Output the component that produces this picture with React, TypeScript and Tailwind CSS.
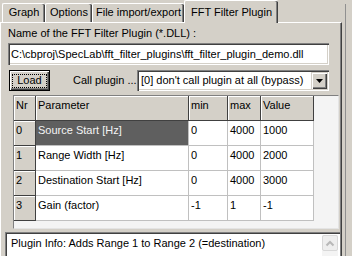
import React from "react";

const rows = [
  { nr: "0", p: "Source Start [Hz]", min: "0", max: "4000", v: "1000", sel: true },
  { nr: "1", p: "Range Width [Hz]", min: "0", max: "4000", v: "2000", sel: false },
  { nr: "2", p: "Destination Start [Hz]", min: "0", max: "4000", v: "3000", sel: false },
  { nr: "3", p: "Gain (factor)", min: "-1", max: "1", v: "-1", sel: false },
];

const fixedCell =
  "h-[25px] border-r border-b border-[#404040] bg-[#d4d0c8] shadow-[inset_1px_1px_0_#fff] pl-[2px] pt-[3px] whitespace-nowrap overflow-hidden";
const cell =
  "h-[25px] border-r border-b border-[#c0c0c0] bg-white pl-[2px] pt-[3px] whitespace-nowrap overflow-hidden";
const selCell =
  "h-[25px] border-r border-b border-[#c0c0c0] bg-[#5f5f5f] text-[#f4f4f4] pl-[2px] pt-[3px] whitespace-nowrap overflow-hidden";

const tabInactive =
  "h-[19px] shrink-0 flex items-center justify-center rounded-t-[2px] border-l border-t border-white shadow-[inset_-1px_0_0_#404040,inset_-2px_0_0_#808080] pb-[1px]";

export default function App() {
  return (
    <div className="w-[352px] h-[256px] overflow-hidden bg-[#d4d0c8] font-['Liberation_Sans',Arial,sans-serif] text-[11px] leading-[13px] text-black flex">
      <div className="w-[342px] shrink-0 flex flex-col">
        {/* tab strip */}
        <div className="h-[22px] shrink-0 flex items-end pl-[2px]">
          <div className={`${tabInactive} w-[43px]`}>Graph</div>
          <div className={`${tabInactive} w-[47px]`}>Options</div>
          <div className={`${tabInactive} w-[92px]`}>File import/export</div>
          <div className="relative z-10 h-[23px] w-[94px] -mb-[1px] shrink-0 bg-[#d4d0c8] flex justify-center pt-[5px] rounded-t-[2px] border-l border-t border-white shadow-[inset_-1px_0_0_#404040,inset_-2px_0_0_#808080]">
            FFT Filter Plugin
          </div>
        </div>

        {/* tab sheet */}
        <div className="flex-1 flex flex-col border-t border-l border-white border-r border-r-[#404040] shadow-[inset_-1px_0_0_#808080]">
          <div className="mt-[4px] ml-[7px] whitespace-nowrap">Name of the FFT Filter Plugin (*.DLL) :</div>

          <div className="mt-[3px] ml-[7px] w-[321px] h-[22px] shrink-0 bg-white flex items-center pl-[3px] whitespace-nowrap overflow-hidden shadow-[inset_1px_1px_0_#808080,inset_2px_2px_0_#404040,inset_-1px_-1px_0_#fff,inset_-2px_-2px_0_#d4d0c8]">
            C:\cbproj\SpecLab\fft_filter_plugins\fft_filter_plugin_demo.dll
          </div>

          <div className="mt-[5px] h-[21px] shrink-0 flex items-center">
            <div className="ml-[8px] w-[41px] h-[21px] border border-black bg-[#d4d0c8] flex items-center justify-center shadow-[inset_1px_1px_0_#fff,inset_-1px_-1px_0_#404040,inset_-2px_-2px_0_#808080]">
              <div className="w-[35px] h-[14px] border border-dotted border-black flex items-center justify-center">
                Load
              </div>
            </div>
            <div className="ml-[23px] w-[64px] whitespace-nowrap">Call plugin ...</div>
            <div className="w-[192px] h-[21px] bg-white flex items-center p-[2px] shadow-[inset_1px_1px_0_#808080,inset_2px_2px_0_#404040,inset_-1px_-1px_0_#fff,inset_-2px_-2px_0_#d4d0c8]">
              <div className="flex-1 pl-[2px] whitespace-nowrap overflow-hidden">
                [0] don&apos;t call plugin at all (bypass)
              </div>
              <div className="w-[16px] h-[17px] bg-[#d4d0c8] flex items-center justify-center shadow-[inset_1px_1px_0_#d4d0c8,inset_2px_2px_0_#fff,inset_-1px_-1px_0_#404040,inset_-2px_-2px_0_#808080]">
                <svg width="7" height="4" viewBox="0 0 7 4">
                  <polygon points="0,0 7,0 3.5,4" fill="#000" />
                </svg>
              </div>
            </div>
          </div>

          {/* grid */}
          <div className="mt-[4px] ml-[12px] w-[326px] h-[134px] shrink-0 border border-t-[#808080] border-l-[#808080] border-r-[#e4e4e4] border-b-[#e4e4e4] bg-[#f4f4f4]">
            <div className="grid grid-cols-[22px_153px_39px_33px_53px] w-[300px]">
              <div className={fixedCell}>Nr</div>
              <div className={fixedCell}>Parameter</div>
              <div className={fixedCell}>min</div>
              <div className={fixedCell}>max</div>
              <div className={fixedCell}>Value</div>
              {rows.map((r) => (
                <React.Fragment key={r.nr}>
                  <div className={fixedCell}>{r.nr}</div>
                  <div className={r.sel ? selCell : cell}>{r.p}</div>
                  <div className={cell}>{r.min}</div>
                  <div className={cell}>{r.max}</div>
                  <div className={cell}>{r.v}</div>
                </React.Fragment>
              ))}
            </div>
          </div>

          {/* info memo */}
          <div className="mt-[3px] ml-[4px] w-[335px] flex-1 bg-white flex shadow-[inset_1px_1px_0_#808080,inset_2px_2px_0_#404040]">
            <div className="flex-1 pl-[6px] pt-[5px] whitespace-nowrap overflow-hidden">
              Plugin Info: Adds Range 1 to Range 2 (=destination)
            </div>
            <div className="w-[16px] mr-[2px] mt-[3px] bg-[#f4f4f4] flex flex-col">
              <div className="h-[16px] border border-[#d8d8d8] rounded-[2px] bg-[#eeeeee] flex items-center justify-center">
                <svg width="10" height="7" viewBox="0 0 10 7">
                  <polyline points="1.5,5.5 5,2 8.5,5.5" fill="none" stroke="#b8b8b8" strokeWidth="2" />
                </svg>
              </div>
            </div>
          </div>
        </div>
      </div>
      <div className="ml-[3px] w-px mt-[4px] bg-[#909090]" />
    </div>
  );
}
